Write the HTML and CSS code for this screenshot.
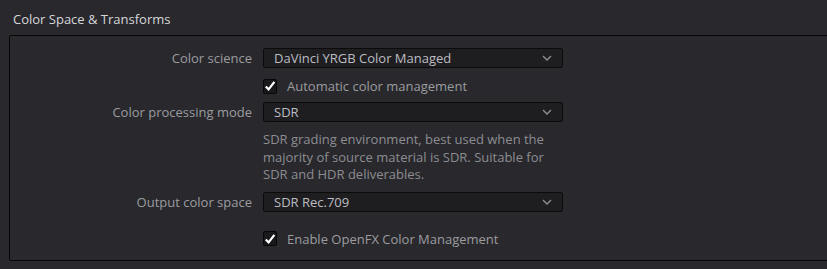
FILE: index.html
```html
<!DOCTYPE html>
<html lang="en">
<head>
    <meta charset="UTF-8">
    <title>Color Space &amp; Transforms</title>
    <link rel="stylesheet" href="styles.css">
</head>
<body>
    <div class="section-title">Color Space &amp; Transforms</div>

    <div class="panel">
        <div class="row row-select">
            <div class="label">Color science</div>
            <div class="select">
                <span>DaVinci YRGB Color Managed</span>
                <svg class="chevron" width="10" height="6" viewBox="0 0 10 6"><path d="M1 1 L5 5 L9 1" fill="none" stroke="#8e8e92" stroke-width="1.4"/></svg>
            </div>
        </div>

        <div class="row row-check first-check">
            <div class="label"></div>
            <label class="check">
                <span class="box">
                    <svg width="12" height="12" viewBox="0 0 12 12"><path d="M1.8 6.4 L4.6 9.4 L10.4 1.8" fill="none" stroke="#ffffff" stroke-width="2.2"/></svg>
                </span>
                Automatic color management
            </label>
        </div>

        <div class="row row-select">
            <div class="label">Color processing mode</div>
            <div class="select">
                <span>SDR</span>
                <svg class="chevron" width="10" height="6" viewBox="0 0 10 6"><path d="M1 1 L5 5 L9 1" fill="none" stroke="#8e8e92" stroke-width="1.4"/></svg>
            </div>
        </div>

        <div class="row">
            <div class="label"></div>
            <p class="hint">SDR grading environment, best used when the majority of source material is SDR. Suitable for SDR and HDR deliverables.</p>
        </div>

        <div class="row row-select">
            <div class="label">Output color space</div>
            <div class="select">
                <span>SDR Rec.709</span>
                <svg class="chevron" width="10" height="6" viewBox="0 0 10 6"><path d="M1 1 L5 5 L9 1" fill="none" stroke="#8e8e92" stroke-width="1.4"/></svg>
            </div>
        </div>

        <div class="row row-check last-check">
            <div class="label"></div>
            <label class="check">
                <span class="box">
                    <svg width="12" height="12" viewBox="0 0 12 12"><path d="M1.8 6.4 L4.6 9.4 L10.4 1.8" fill="none" stroke="#ffffff" stroke-width="2.2"/></svg>
                </span>
                Enable OpenFX Color Management
            </label>
        </div>
    </div>
</body>
</html>
```

FILE: styles.css
```css
* {
    margin: 0;
    padding: 0;
    box-sizing: border-box;
    font-family: 'Open Sans', 'Noto Sans', sans-serif;
}

body {
    background-color: #28282d;
    color: #9c9c9f;
    font-size: 13px;
    overflow: hidden;
    width: 827px;
    height: 269px;
}

.section-title {
    color: #d7d7da;
    font-size: 13px;
    padding: 10px 0 0 13px;
    height: 35px;
}

.panel {
    margin-left: 9px;
    width: 840px;
    height: 226px;
    border: 1px solid #060607;
    border-radius: 2px;
    padding-top: 12px;
}

.row {
    display: grid;
    grid-template-columns: 242px 300px;
    column-gap: 11px;
    align-items: center;
}

.label {
    text-align: right;
    color: #9c9c9f;
    white-space: nowrap;
}

.row-select {
    height: 20px;
}

.select {
    height: 20px;
    background-color: #1e1e21;
    border: 1px solid #0b0b0c;
    border-radius: 2px;
    display: flex;
    align-items: center;
    justify-content: space-between;
    padding: 0 10px 0 10px;
    color: #bdbdc1;
}

.chevron {
    display: block;
}

.row-check {
    height: 15px;
}

.first-check {
    margin: 9px 0 10px;
}

.last-check {
    margin-top: 18px;
}

.check {
    display: flex;
    align-items: center;
    gap: 10px;
    color: #9c9c9f;
}

.box {
    width: 14px;
    height: 15px;
    background-color: #19191b;
    border: 1px solid #070708;
    border-radius: 2px;
    display: flex;
    align-items: center;
    justify-content: center;
}

.box svg {
    display: block;
}

.hint {
    line-height: 17.5px;
    color: #8d8d91;
    margin: 9px 0 8px;
}
```
